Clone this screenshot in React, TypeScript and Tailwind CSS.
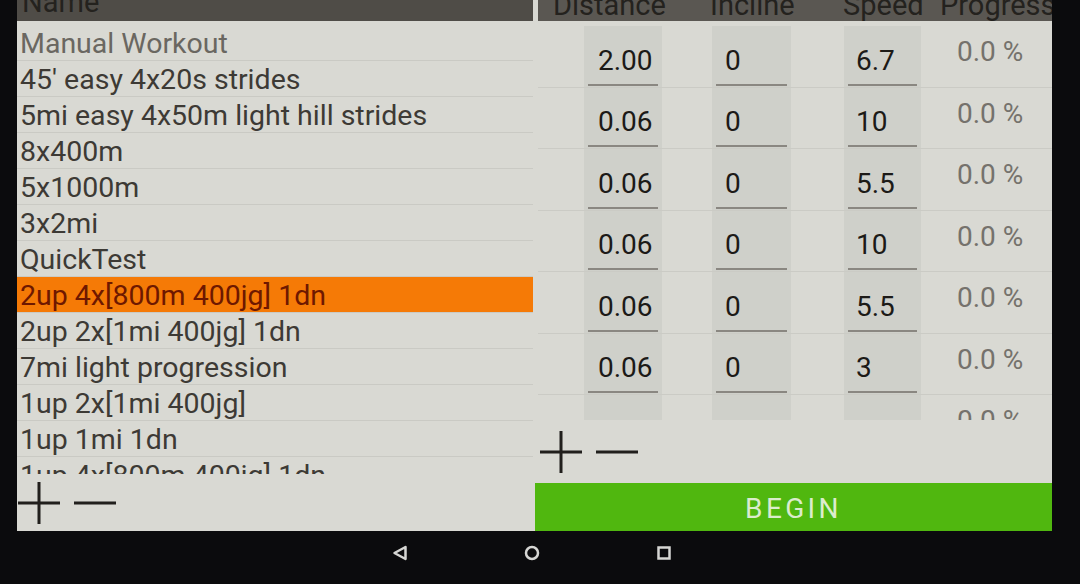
import React from 'react';

const workouts = [
  'Manual Workout',
  "45' easy 4x20s strides",
  '5mi easy 4x50m light hill strides',
  '8x400m',
  '5x1000m',
  '3x2mi',
  'QuickTest',
  '2up 4x[800m 400jg] 1dn',
  '2up 2x[1mi 400jg] 1dn',
  '7mi light progression',
  '1up 2x[1mi 400jg]',
  '1up 1mi 1dn',
  '1up 4x[800m 400jg] 1dn',
];

const segments = [
  { distance: '2.00', incline: '0', speed: '6.7' },
  { distance: '0.06', incline: '0', speed: '10' },
  { distance: '0.06', incline: '0', speed: '5.5' },
  { distance: '0.06', incline: '0', speed: '10' },
  { distance: '0.06', incline: '0', speed: '5.5' },
  { distance: '0.06', incline: '0', speed: '3' },
  { distance: '', incline: '', speed: '' },
];

const SELECTED = 7;

const PlusMinus: React.FC = () => (
  <div className="flex items-center gap-[14px]">
    <svg width="42" height="42" viewBox="0 0 42 42">
      <path d="M0 21H42M21 0V42" stroke="#211f1c" strokeWidth="3" />
    </svg>
    <svg width="42" height="42" viewBox="0 0 42 42">
      <path d="M0 21H42" stroke="#211f1c" strokeWidth="3" />
    </svg>
  </div>
);

interface CellProps {
  width: string;
  pad: string;
  value: string;
  last?: boolean;
}

const Cell: React.FC<CellProps> = ({ width, pad, value, last }) => (
  <div className={`${width} shrink-0 h-full bg-[#cfd0ca] flex flex-col`}>
    <div className={`flex-1 flex items-center ${pad} pt-[12px] text-[28px] leading-none text-[#1c1a17]`}>{value}</div>
    {!last && <div className="h-[2px] mx-[4px] mb-[1px] bg-[#8a8781]" />}
  </div>
);

export default function App() {
  return (
    <div className="w-[1080px] h-[584px] bg-[#0b0b0d] overflow-hidden flex flex-col" style={{ fontFamily: 'Roboto, "Noto Sans", sans-serif' }}>
      {/* screen */}
      <div className="h-[531px] flex pl-[17px]">
        <div className="w-[1035px] h-full bg-[#d9d9d3] flex gap-[5px]">
          {/* workout list */}
          <div className="w-[516px] shrink-0 flex flex-col">
            <div className="h-[21px] bg-[#4f4c47] overflow-hidden pl-[5px]">
              <div className="-mt-[12px] text-[29px] leading-none text-[#24221e]">Name</div>
            </div>
            <div className="h-[453px] overflow-hidden pt-[4px]">
              {workouts.map((w, i) => (
                <div
                  key={i}
                  className={`h-[36px] flex items-center pt-[4px] pl-[3px] text-[28.5px] leading-none whitespace-nowrap border-b border-[#cacac4] ${
                    i === SELECTED ? 'bg-[#f57a06] text-[#6e1800]' : i === 0 ? 'text-[#6a6761]' : 'text-[#3d3a35]'
                  }`}
                >
                  {w}
                </div>
              ))}
            </div>
            <div className="flex-1 flex items-center pl-[1px]">
              <PlusMinus />
            </div>
          </div>

          {/* segments */}
          <div className="flex-1 min-w-0 flex flex-col">
            <div className="h-[21px] bg-[#5a5752] overflow-hidden flex text-[29px] leading-none text-[#24221e] whitespace-nowrap">
              <div className="w-[172px] shrink-0 pl-[15px] -mt-[9px]">Distance</div>
              <div className="w-[133px] shrink-0 -mt-[9px]">Incline</div>
              <div className="w-[97px] shrink-0 -mt-[9px]">Speed</div>
              <div className="flex-1 -mt-[9px]">Progress</div>
            </div>
            <div className="h-[399px] overflow-hidden pt-[5px]">
              {segments.map((s, i) => (
                <div key={i} className="h-[61.5px] flex border-b border-[#cbcbc5]">
                  <div className="w-[46px] shrink-0" />
                  <Cell width="w-[78px]" pad="pl-[14px]" value={s.distance} last={i === segments.length - 1} />
                  <div className="w-[50px] shrink-0" />
                  <Cell width="w-[79px]" pad="pl-[13px]" value={s.incline} last={i === segments.length - 1} />
                  <div className="w-[53px] shrink-0" />
                  <Cell width="w-[77px]" pad="pl-[12px]" value={s.speed} last={i === segments.length - 1} />
                  <div className="flex-1 pl-[36px] pt-[12px] text-[28px] leading-none text-[#75726c] whitespace-nowrap">0.0 %</div>
                </div>
              ))}
            </div>
            <div className="h-[63px] flex items-center pl-[2px]">
              <PlusMinus />
            </div>
            <div className="flex-1 -ml-[3px] pt-[4px] bg-[#50b70f] flex items-center justify-center text-[28px] tracking-[0.12em] text-[#dbeccd]">
              BEGIN
            </div>
          </div>
        </div>
      </div>

      {/* navigation bar */}
      <div className="flex-1 flex pl-[392px] gap-[116px] pt-[14px]">
        <svg width="16" height="16" viewBox="0 0 16 16">
          <path d="M13.5 2L2.5 8L13.5 14Z" fill="none" stroke="#d6d6d3" strokeWidth="2.5" strokeLinejoin="round" />
        </svg>
        <svg width="16" height="16" viewBox="0 0 16 16">
          <circle cx="8" cy="8" r="6" fill="none" stroke="#d6d6d3" strokeWidth="2.5" />
        </svg>
        <svg width="16" height="16" viewBox="0 0 16 16">
          <rect x="2.5" y="2.5" width="11" height="11" fill="none" stroke="#d6d6d3" strokeWidth="2.5" />
        </svg>
      </div>
    </div>
  );
}
